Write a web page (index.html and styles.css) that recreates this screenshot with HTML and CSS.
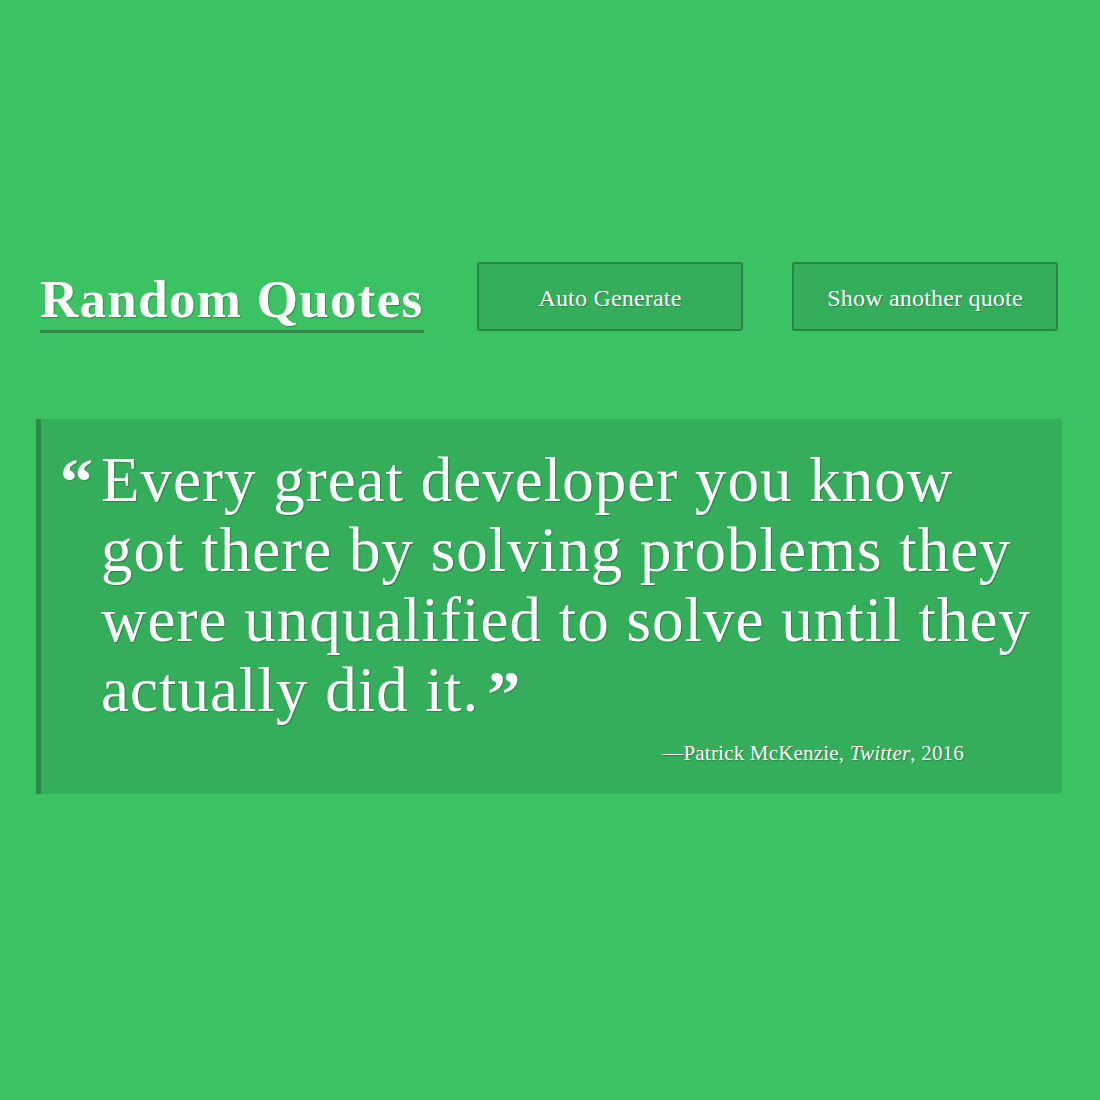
FILE: index.html
```html
<!DOCTYPE html>
<html lang="en">
<head>
<meta charset="utf-8">
<title>Random Quotes</title>
<link rel="stylesheet" href="styles.css">
</head>
<body>
<div class="page">
  <header class="header">
    <h1 class="title">Random Quotes</h1>
    <div class="actions">
      <button class="btn">Auto Generate</button>
      <button class="btn">Show another quote</button>
    </div>
  </header>
  <blockquote class="quote">
    <div class="quote-body">
      <span class="mark open">&ldquo;</span>
      <p class="quote-text">Every great developer you know got there by solving problems they were unqualified to solve until they actually did it.<span class="mark close">&rdquo;</span></p>
    </div>
    <p class="cite">&mdash;Patrick McKenzie, <em>Twitter</em>, 2016</p>
  </blockquote>
</div>
</body>
</html>
```

FILE: styles.css
```css
html, body {
  margin: 0;
  padding: 0;
}
body {
  background: #3bc263;
  font-family: "Liberation Serif", "Times New Roman", serif;
  color: #fff;
}
.page {
  width: 1026px;
  margin: 0 0 0 36px;
  padding-top: 262px;
}
.header {
  display: flex;
  align-items: flex-end;
  justify-content: space-between;
  padding: 0 4px 0 4px;
}
.title {
  margin: 0;
  font-size: 53px;
  font-weight: bold;
  letter-spacing: 1.3px;
  line-height: 58px;
  border-bottom: 3px solid #2d8a4b;
  padding-bottom: 2px;
  text-shadow: 1px 1px 1px rgba(0,0,0,0.25);
  margin-bottom: -2px;
}
.actions {
  display: flex;
  gap: 49px;
}
.btn {
  width: 266px;
  height: 69px;
  background: #34ae5b;
  border: 2px solid #2a8345;
  border-radius: 3px;
  color: #fff;
  font-family: "Liberation Serif", "Times New Roman", serif;
  font-size: 24px;
  letter-spacing: 0.2px;
  text-shadow: 1px 1px 1px rgba(0,0,0,0.25);
  padding: 4px 0 0 0;
  cursor: pointer;
}
.quote {
  margin: 88px 0 0 0;
  background: #34ae5b;
  border-left: 5px solid #2c8a46;
  border-radius: 0 3px 3px 0;
  padding: 26px 20px 28px 19px;
}
.quote-body {
  display: flex;
  align-items: flex-start;
}
.mark {
  font-weight: bold;
  font-size: 66px;
  line-height: 1;
  text-shadow: 1px 1px 1px rgba(0,0,0,0.2);
}
.open {
  width: 41px;
  flex: none;
  margin-top: 4px;
}
.close {
  display: inline-block;
  line-height: 0;
  vertical-align: -5px;
  margin-left: 8px;
}
.quote-text {
  margin: 0;
  max-width: 935px;
  font-size: 63px;
  letter-spacing: 1px;
  line-height: 70px;
  text-shadow: 1px 1px 1px rgba(0,0,0,0.25);
}
.cite {
  margin: 16px 78px 0 0;
  text-align: right;
  font-size: 21px;
  letter-spacing: 0.2px;
  text-shadow: 1px 1px 1px rgba(0,0,0,0.25);
}
```
